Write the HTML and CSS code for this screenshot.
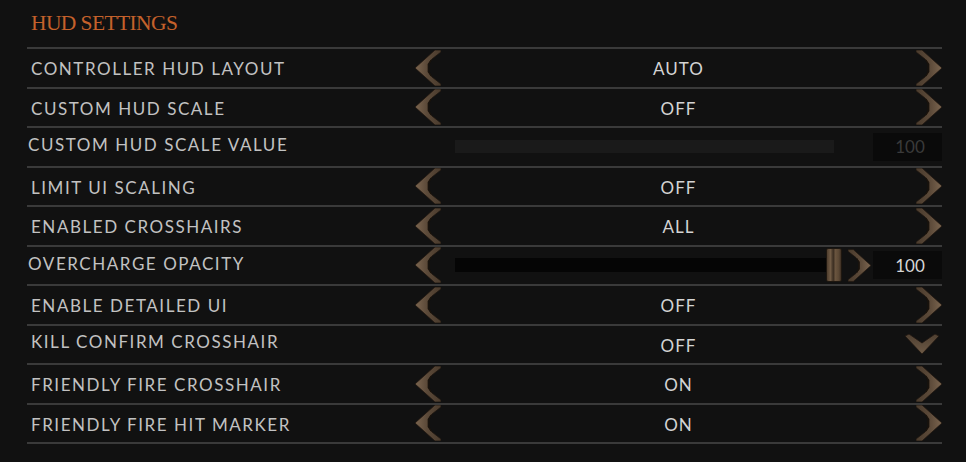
FILE: index.html
```html
<!DOCTYPE html>
<html lang="en">
<head>
    <meta charset="UTF-8">
    <title>HUD Settings</title>
    <link rel="stylesheet" href="styles.css">
</head>
<body>
    <svg class="defs" width="0" height="0">
        <defs>
            <linearGradient id="wood" x1="0" y1="0" x2="1" y2="0">
                <stop offset="0" stop-color="#7c6650"/>
                <stop offset="0.45" stop-color="#5c4a39"/>
                <stop offset="1" stop-color="#4a3b2d"/>
            </linearGradient>
            <linearGradient id="wood-down" x1="0" y1="0" x2="0" y2="1">
                <stop offset="0" stop-color="#4e3f31"/>
                <stop offset="1" stop-color="#6e5a46"/>
            </linearGradient>
            <symbol id="chev" viewBox="0 0 26 36">
                <polygon points="20,0 26,0 26,2 17,9 13,14 13,22 17,27 26,34 26,36 20,36 0,18" fill="url(#wood)" stroke="#1f1710" stroke-width="0.8"/>
                <polyline points="16,10 14,14 14,22 16,26" fill="none" stroke="#1a130c" stroke-width="1.2"/>
            </symbol>
            <symbol id="down" viewBox="0 0 34 20">
                <polygon points="0,2 4,0 17,9 30,0 34,2 17,20" fill="url(#wood-down)" stroke="#1f1710" stroke-width="0.8"/>
            </symbol>
        </defs>
    </svg>

    <div class="panel">
        <h1 class="title">HUD SETTINGS</h1>

        <div class="row">
            <div class="label">CONTROLLER HUD LAYOUT</div>
            <div class="option">
                <svg class="arrow"><use href="#chev"/></svg>
                <span class="value">AUTO</span>
                <svg class="arrow flip"><use href="#chev"/></svg>
            </div>
        </div>

        <div class="row">
            <div class="label">CUSTOM HUD SCALE</div>
            <div class="option">
                <svg class="arrow"><use href="#chev"/></svg>
                <span class="value">OFF</span>
                <svg class="arrow flip"><use href="#chev"/></svg>
            </div>
        </div>

        <div class="row">
            <div class="label shifted">CUSTOM HUD SCALE VALUE</div>
            <div class="slider disabled">
                <div class="track"></div>
                <div class="number">100</div>
            </div>
        </div>

        <div class="row">
            <div class="label">LIMIT UI SCALING</div>
            <div class="option">
                <svg class="arrow"><use href="#chev"/></svg>
                <span class="value">OFF</span>
                <svg class="arrow flip"><use href="#chev"/></svg>
            </div>
        </div>

        <div class="row">
            <div class="label">ENABLED CROSSHAIRS</div>
            <div class="option">
                <svg class="arrow"><use href="#chev"/></svg>
                <span class="value">ALL</span>
                <svg class="arrow flip"><use href="#chev"/></svg>
            </div>
        </div>

        <div class="row">
            <div class="label shifted">OVERCHARGE OPACITY</div>
            <div class="slider">
                <svg class="arrow"><use href="#chev"/></svg>
                <div class="track"></div>
                <div class="thumb"></div>
                <svg class="arrow small flip"><use href="#chev"/></svg>
                <div class="number">100</div>
            </div>
        </div>

        <div class="row">
            <div class="label">ENABLE DETAILED UI</div>
            <div class="option">
                <svg class="arrow"><use href="#chev"/></svg>
                <span class="value">OFF</span>
                <svg class="arrow flip"><use href="#chev"/></svg>
            </div>
        </div>

        <div class="row">
            <div class="label raised">KILL CONFIRM CROSSHAIR</div>
            <div class="option">
                <span class="arrow-gap"></span>
                <span class="value">OFF</span>
                <svg class="dropdown"><use href="#down"/></svg>
            </div>
        </div>

        <div class="row">
            <div class="label">FRIENDLY FIRE CROSSHAIR</div>
            <div class="option">
                <svg class="arrow"><use href="#chev"/></svg>
                <span class="value">ON</span>
                <svg class="arrow flip"><use href="#chev"/></svg>
            </div>
        </div>

        <div class="row last">
            <div class="label">FRIENDLY FIRE HIT MARKER</div>
            <div class="option">
                <svg class="arrow"><use href="#chev"/></svg>
                <span class="value">ON</span>
                <svg class="arrow flip"><use href="#chev"/></svg>
            </div>
        </div>
    </div>
</body>
</html>
```

FILE: styles.css
```css
body { margin: 0; background: #111111; font-family: Lato, "Open Sans", sans-serif; }
.defs { position: absolute; }
.panel { width: 915px; margin-left: 27px; }

.title { margin: 0; height: 47px; display: flex; align-items: center; padding-left: 4px; font-family: "Liberation Serif", serif; font-weight: normal; font-size: 21.5px; color: #c5612b; letter-spacing: -0.6px; }

.row { height: 37.5px; border-top: 2px solid #3a3a3a; display: flex; align-items: center; }
.row.last { border-bottom: 2px solid #3a3a3a; }

.label { width: 388px; padding-left: 4px; padding-top: 2px; box-sizing: border-box; font-size: 17px; color: #c2c2c2; letter-spacing: 1.55px; }
.label.shifted { padding-left: 1px; padding-top: 0; margin-top: -4px; }
.label.raised { padding-top: 0; margin-top: -6px; }

.option { flex: 1; height: 100%; display: flex; align-items: center; }
.value { flex: 1; padding-top: 2px; text-align: center; font-size: 17px; color: #d4d4d4; letter-spacing: 1px; }
.arrow { width: 26px; height: 36px; flex: none; }
.arrow.flip { transform: scaleX(-1); }
.arrow.small { width: 23px; height: 33px; margin-left: 6px; margin-right: 2px; }
.arrow-gap { width: 26px; }
.dropdown { width: 34px; height: 20px; flex: none; margin-right: 3px; margin-left: -11px; }

.slider { flex: 1; height: 100%; display: flex; align-items: center; }
.slider .track { flex: 1; height: 14px; background: #050505; margin-left: 14px; }
.slider.disabled .track { background: #1a1a1a; margin-left: 40px; margin-right: 39px; height: 13px; }
.thumb { width: 14px; height: 32px; border: 1px solid #1e1710; border-radius: 2px; background: linear-gradient(90deg, #4f3e2e 0%, #6f5a44 25%, #3a2d21 45%, #6a553f 60%, #5a4734 85%, #3d2f23 100%); }
.number { width: 69px; height: 28px; background: #0a0a0a; display: flex; align-items: center; justify-content: center; padding-left: 5px; box-sizing: border-box; font-size: 17px; color: #d6d6d6; }
.slider.disabled .number { color: #3a3a3a; }
```
